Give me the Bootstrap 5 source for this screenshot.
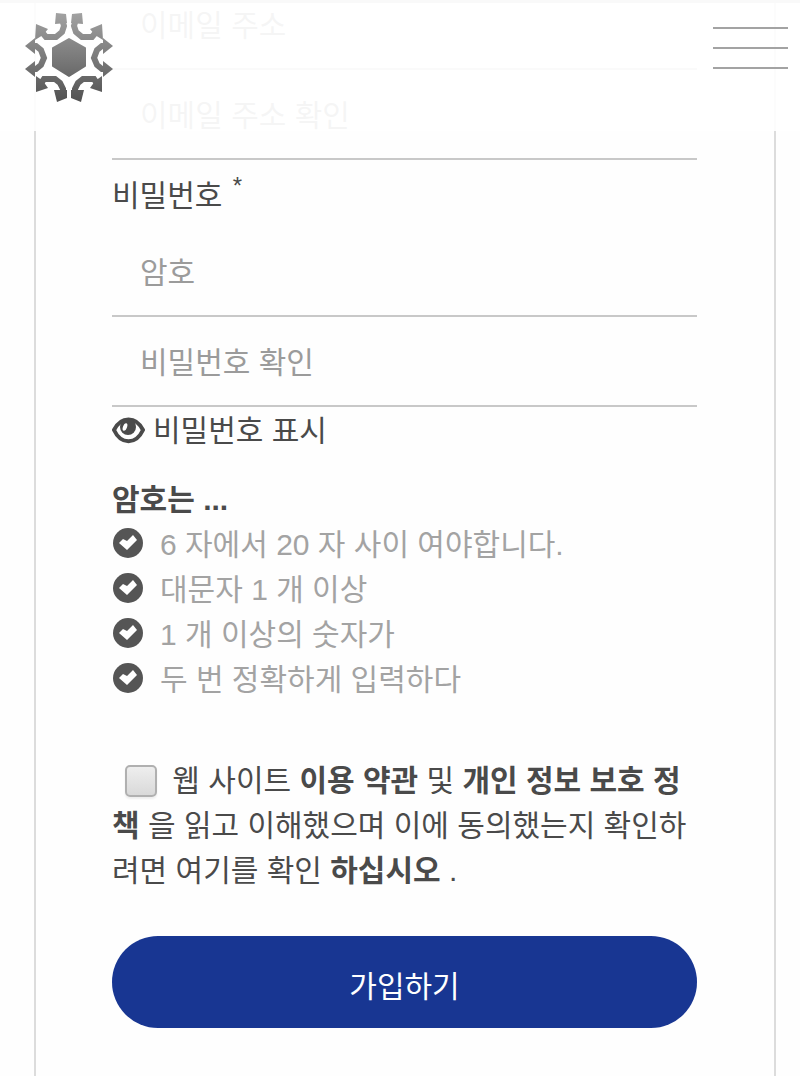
<!DOCTYPE html>
<html lang="ko">
<head>
<meta charset="utf-8">
<meta name="viewport" content="width=device-width, initial-scale=1">
<title>가입하기</title>
<link href="https://cdn.jsdelivr.net/npm/bootstrap@5.3.0/dist/css/bootstrap.min.css" rel="stylesheet">
<style>
  body { font-family: "Liberation Sans", "Noto Sans CJK KR", sans-serif; font-size: 30px; line-height: 45px; color: #4a4a4a; background: #fefefe; overflow-x: hidden; }
  .site-bar { height: 131px; padding: 10px 12px 0 24px; background: rgba(255,255,255,.9); border-top: 3px solid #f9f9f9; }
  .brand-mark { width: 90px; height: 90px; }
  .menu-btn { width: 75px; margin-top: 14px; }
  .menu-btn span { display: block; height: 2px; background: #a3a3a3; margin-bottom: 18px; }
  .menu-btn span:last-child { margin-bottom: 0; }
  .sign-panel { margin: -20px 24px 0 34px; padding: 0 77px 48px 76px; border: solid #dcdcdc; border-width: 0 2px; min-height: calc(100vh + 20px); }
  .line-input { height: 90px; padding: 4px 28px 0; border: 0; border-bottom: 2px solid #c8c8c8; border-radius: 0; font-size: 30px; line-height: 45px; background: transparent; }
  .line-input::placeholder { color: #9b9b9b; opacity: 1; }
  .field-title { padding: 13px 0 9px; }
  .field-title sup { font-size: 24px; top: -12px; left: 2px; }
  .show-btn { color: inherit; font-size: 30px; line-height: 45px; gap: 8px; margin-top: 1px; }
  .rules { color: #a3a3a3; }
  .rules li { gap: 16px; }
  .rules svg { width: 32px; height: 32px; margin-bottom: 4px; }
  .terms { margin: 56px 0 43px; }
  .tick { appearance: none; width: 32px; height: 32px; margin: 0 7px 0 13px; vertical-align: -6px; border: 2px solid #b0b0b0; border-radius: 5px; background: linear-gradient(#eee, #d9d9d9); box-shadow: 0 2px 2px #eee; }
  .tick:checked { background: #183692; }
  .join-btn { height: 92px; border-radius: 46px; background: #183692; color: #fff; font-size: 30px; padding-top: 14px; }
  .join-btn:hover { background: #122a75; color: #fff; }
</style>
</head>
<body>
<header class="site-bar fixed-top d-flex justify-content-between align-items-start">
  <a href="#" aria-label="홈">
    <svg class="brand-mark d-block" viewBox="0 0 90 90">
      <defs>
        <linearGradient id="metal" gradientUnits="userSpaceOnUse" x1="0" y1="0" x2="0" y2="90"><stop offset="0" stop-color="#a2a2a2"/><stop offset=".5" stop-color="#7a7a7a"/><stop offset="1" stop-color="#505050"/></linearGradient>
        <g id="arrows">
          <path fill="none" stroke="url(#metal)" stroke-width="6" d="M38 6 40 13 38 19 32 24H22L17 18M7 33H12L17 37 20 45 17 52 12 56H7M16 72 20 66H31L36 70 39 76V82"/>
          <path fill="url(#metal)" d="M32 0 42 1 43 10 31 11zM12 11 24 16 19 22 11 27zM1 33 11 25V41zM1 56 11 48V64zM12 63 19 68 24 75 12 79zM30 77 43 77 43 85 33 89z"/>
        </g>
      </defs>
      <path fill="url(#metal)" stroke="url(#metal)" stroke-width="2" stroke-linejoin="round" d="M45 26 61 35V53L45 63 29 53V35z"/>
      <use href="#arrows"/>
      <use href="#arrows" transform="matrix(-1 0 0 1 90 0)"/>
    </svg>
  </a>
  <button class="menu-btn btn p-0 border-0 rounded-0" type="button" aria-label="메뉴"><span></span><span></span><span></span></button>
</header>

<main class="d-flex flex-column">
  <form class="sign-panel">
    <input class="form-control line-input" type="email" placeholder="이메일 주소" aria-label="이메일 주소">
    <input class="form-control line-input" type="email" placeholder="이메일 주소 확인" aria-label="이메일 주소 확인">
    <label class="field-title d-block" for="pw">비밀번호 <sup>*</sup></label>
    <input class="form-control line-input" id="pw" type="password" placeholder="암호">
    <input class="form-control line-input" type="password" placeholder="비밀번호 확인" aria-label="비밀번호 확인">
    <button class="show-btn btn border-0 p-0 d-flex align-items-center" type="button">
      <svg width="33" height="28" viewBox="0 0 33 28"><path fill="#fefefe" stroke="#4a4a4a" stroke-width="4" stroke-linejoin="round" d="M2 13C9-1 24-1 31 13 24 28 9 28 2 13z"/><circle cx="16" cy="10" r="8" fill="#4a4a4a"/><ellipse cx="13" cy="10" rx="2" ry="4" fill="#fefefe" transform="rotate(20 13 10)"/></svg>
      <span>비밀번호 표시</span>
    </button>
    <div class="fw-bold mt-4">암호는 ...</div>
    <svg class="d-none"><symbol id="ok" viewBox="0 0 32 32"><circle cx="16" cy="16" r="15" fill="#555"/><path fill="#fff" d="M7 16 11 12 15 14 21 8 25 13 15 23z"/></symbol></svg>
    <ul class="rules list-unstyled mb-0">
      <li class="d-flex align-items-center"><svg><use href="#ok"/></svg>6 자에서 20 자 사이 여야합니다.</li>
      <li class="d-flex align-items-center"><svg><use href="#ok"/></svg>대문자 1 개 이상</li>
      <li class="d-flex align-items-center"><svg><use href="#ok"/></svg>1 개 이상의 숫자가</li>
      <li class="d-flex align-items-center"><svg><use href="#ok"/></svg>두 번 정확하게 입력하다</li>
    </ul>
    <div class="terms">
      <input class="tick" type="checkbox" id="agree">
      <label class="d-inline" for="agree">웹 사이트 <a class="fw-bold text-reset text-decoration-none" href="#">이용 약관</a> 및 <a class="fw-bold text-reset text-decoration-none" href="#">개인 정보 보호 정책</a> 을 읽고 이해했으며 이에 동의했는지 확인하려면 여기를 확인 <strong>하십시오</strong> .</label>
    </div>
    <button class="join-btn btn w-100 border-0" type="submit">가입하기</button>
  </form>
</main>
<script src="https://cdn.jsdelivr.net/npm/bootstrap@5.3.0/dist/js/bootstrap.bundle.min.js"></script>
</body>
</html>
